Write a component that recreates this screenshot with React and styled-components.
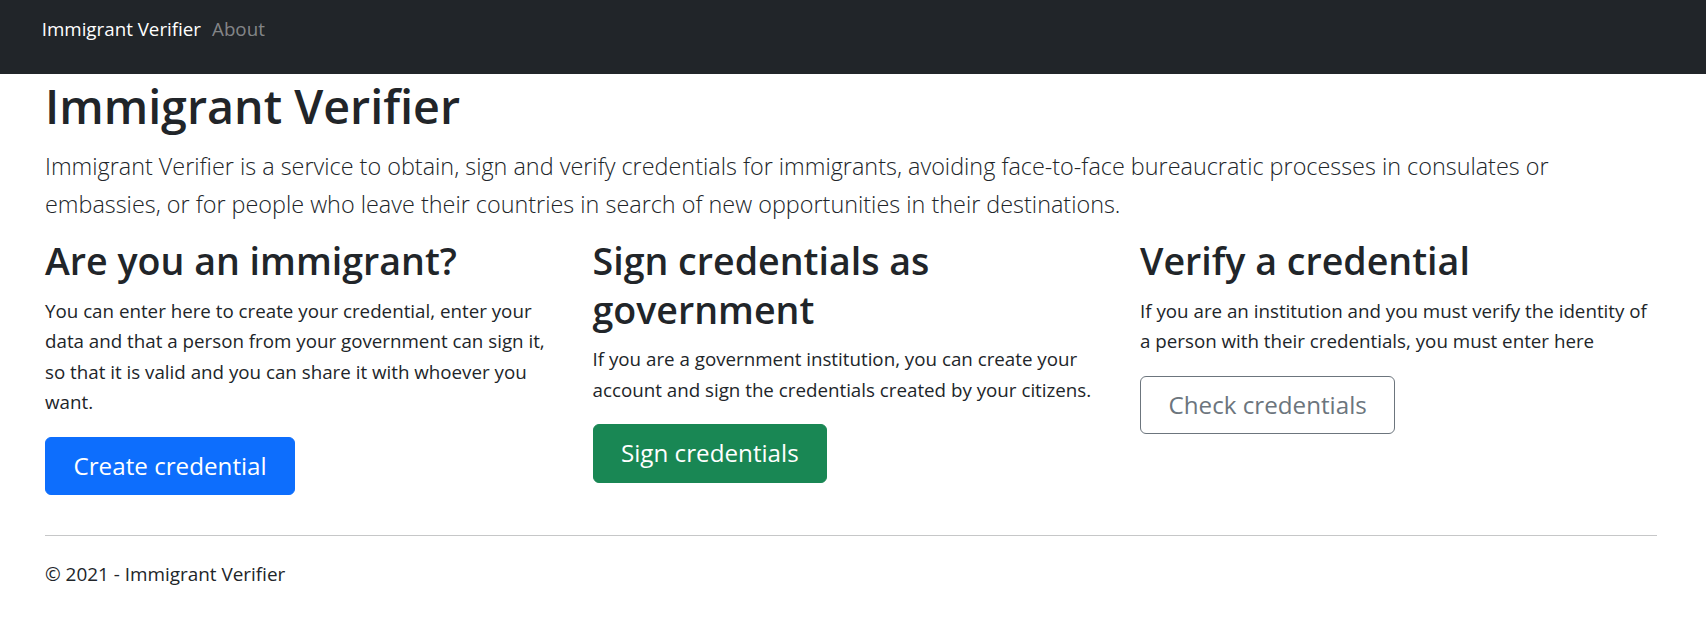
import React from "react";
import styled, { createGlobalStyle, css } from "styled-components";

const GlobalStyle = createGlobalStyle`
  html, body { margin: 0; padding: 0; background: #fff; }
  body {
    font-family: "Open Sans", "Noto Sans", "Liberation Sans", sans-serif;
    color: #212529;
    -webkit-font-smoothing: antialiased;
  }
  * { box-sizing: border-box; }
`;

const Navbar = styled.nav`
  height: 74px;
  background: #212529;
  display: flex;
  align-items: flex-start;
  gap: 11px;
  padding: 14px 0 0 41.7px;
`;

const Brand = styled.a`
  color: #fff;
  font-size: 18.75px;
  line-height: 30.5px;
  text-decoration: none;
`;

const NavLink = styled.a`
  color: rgba(255, 255, 255, 0.45);
  font-size: 18.75px;
  line-height: 30.5px;
  text-decoration: none;
`;

const Main = styled.main`
  padding: 0 49px 0 45px;
`;

const Title = styled.h1`
  margin: 2px 0 10px;
  font-size: 46.6px;
  font-weight: 600;
  line-height: 61px;
`;

const Lead = styled.p`
  margin: 0 0 14px;
  font-size: 23.4px;
  font-weight: 300;
  line-height: 38px;
`;

const Row = styled.div`
  display: grid;
  grid-template-columns: repeat(3, 1fr);
  column-gap: 30.5px;
`;

const Col = styled.section`
  min-width: 0;
`;

const SectionTitle = styled.h2`
  margin: 0 0 10px;
  font-size: 37.6px;
  font-weight: 600;
  line-height: 48.7px;
`;

const Text = styled.p`
  margin: 0 0 19px;
  font-size: 18.75px;
  line-height: 30.5px;
`;

const variants = {
  primary: css`
    background: #0d6efd;
    border-color: #0d6efd;
    color: #fff;
  `,
  success: css`
    background: #198754;
    border-color: #198754;
    color: #fff;
  `,
  outline: css`
    background: transparent;
    border-color: #6c757d;
    color: #6c757d;
  `,
};

const Button = styled.a`
  display: inline-block;
  padding: 10px 27.5px;
  border: 1px solid transparent;
  border-radius: 6px;
  font-size: 24.2px;
  line-height: 36.5px;
  text-decoration: none;
  cursor: pointer;
  ${(p) => variants[p.$variant]}
`;

const Divider = styled.hr`
  margin: 40px 0 0;
  border: 0;
  border-top: 1px solid #c6c7c8;
`;

const Footer = styled.footer`
  margin-top: 23px;
  font-size: 18.9px;
  line-height: 30.5px;
`;

const sections = [
  {
    title: "Are you an immigrant?",
    text: "You can enter here to create your credential, enter your data and that a person from your government can sign it, so that it is valid and you can share it with whoever you want.",
    button: "Create credential",
    variant: "primary",
  },
  {
    title: "Sign credentials as government",
    text: "If you are a government institution, you can create your account and sign the credentials created by your citizens.",
    button: "Sign credentials",
    variant: "success",
  },
  {
    title: "Verify a credential",
    text: "If you are an institution and you must verify the identity of a person with their credentials, you must enter here",
    button: "Check credentials",
    variant: "outline",
  },
];

export default function App() {
  return (
    <>
      <GlobalStyle />
      <Navbar>
        <Brand href="#">Immigrant Verifier</Brand>
        <NavLink href="#">About</NavLink>
      </Navbar>
      <Main>
        <Title>Immigrant Verifier</Title>
        <Lead>
          Immigrant Verifier is a service to obtain, sign and verify credentials for immigrants,
          avoiding face-to-face bureaucratic processes in consulates or embassies, or for people
          who leave their countries in search of new opportunities in their destinations.
        </Lead>
        <Row>
          {sections.map((s) => (
            <Col key={s.title}>
              <SectionTitle>{s.title}</SectionTitle>
              <Text>{s.text}</Text>
              <Button $variant={s.variant}>{s.button}</Button>
            </Col>
          ))}
        </Row>
        <Divider />
        <Footer>© 2021 - Immigrant Verifier</Footer>
      </Main>
    </>
  );
}
